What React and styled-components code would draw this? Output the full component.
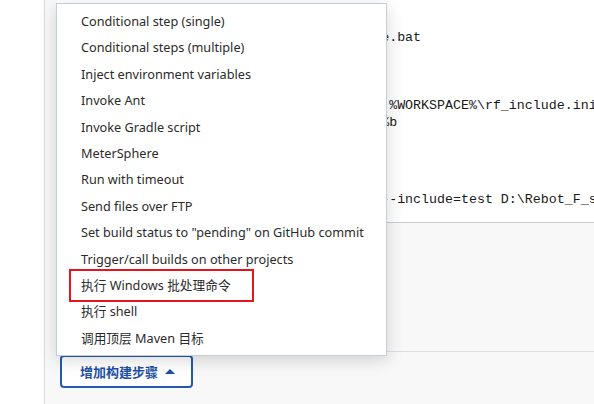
import styled, { createGlobalStyle } from "styled-components";

const GlobalStyle = createGlobalStyle`
  html, body {
    margin: 0;
    padding: 0;
    background: #ffffff;
    overflow: hidden;
  }
  * { box-sizing: border-box; }
`;

const Page = styled.div`
  display: flex;
  width: 594px;
  height: 404px;
  font-family: "Segoe UI", "Noto Sans", "Noto Sans CJK SC", sans-serif;
`;

const Sidebar = styled.div`
  width: 45px;
  flex-shrink: 0;
  background: #ffffff;
  border-right: 1px solid #dadada;
`;

const Main = styled.div`
  flex: 1;
  position: relative;
  display: flex;
  flex-direction: column;
  background: #f8f8f8;
`;

const Editor = styled.div`
  height: 223px;
  margin-left: 12px;
  padding: 29px 0 0 5px;
  background: #ffffff;
  border-bottom: 1px solid #c9d0d5;
  overflow: hidden;
`;

const CodeLine = styled.div`
  height: 17px;
  margin-top: ${(p) => p.$gap || 0}px;
  font-family: "Liberation Mono", monospace;
  font-size: 13.3px;
  line-height: 17px;
  color: #1a1a1a;
  white-space: pre;
`;

const Filler = styled.div`
  height: 128px;
`;

const Footer = styled.div`
  flex: 1;
  margin-left: 12px;
  border-top: 1px solid #dedede;
  padding: 3px 0 0 3px;
`;

const AddButton = styled.button`
  display: flex;
  align-items: center;
  gap: 7px;
  height: 33px;
  width: 133px;
  padding: 0 0 0 18px;
  background: #ffffff;
  border: 2px solid #2459b2;
  border-radius: 4px;
  color: #1d4fa5;
  font-family: "Noto Sans CJK SC", sans-serif;
  font-size: 13px;
  font-weight: 700;
  cursor: pointer;
`;

const Caret = styled.span`
  width: 0;
  height: 0;
  border-left: 5px solid transparent;
  border-right: 5px solid transparent;
  border-bottom: 5px solid #1d4fa5;
  margin-top: -1px;
`;

const Menu = styled.ul`
  position: absolute;
  left: 11px;
  top: 3px;
  width: 331px;
  margin: 0;
  padding: 4px 0;
  list-style: none;
  background: #ffffff;
  border: 1px solid #c6cfd6;
  box-shadow: 0 4px 16px rgba(0, 0, 0, 0.16);
  z-index: 2;
`;

const Item = styled.li`
  position: relative;
  height: 26.4px;
  padding-left: 24px;
  font-size: 12.7px;
  line-height: 26.4px;
  color: #2b2b2b;
  white-space: nowrap;

  ${(p) =>
    p.$marked &&
    `
    &::after {
      content: "";
      position: absolute;
      left: 12px;
      top: -3px;
      width: 181px;
      height: 29px;
      border: 2px solid #e5141e;
    }
  `}
`;

const steps = [
  "Conditional step (single)",
  "Conditional steps (multiple)",
  "Inject environment variables",
  "Invoke Ant",
  "Invoke Gradle script",
  "MeterSphere",
  "Run with timeout",
  "Send files over FTP",
  'Set build status to "pending" on GitHub commit',
  "Trigger/call builds on other projects",
  "执行 Windows 批处理命令",
  "执行 shell",
  "调用顶层 Maven 目标",
];

const App = () => {
  return (
    <Page>
      <GlobalStyle />
      <Sidebar />
      <Main>
        <Editor>
          <CodeLine>{"call D:\\Robot_F_script\\tools\\prepare_case.bat"}</CodeLine>
          <CodeLine />
          <CodeLine />
          <CodeLine />
          <CodeLine>{"for /f \"usebackq tokens=*\" %%b in ('type %WORKSPACE%\\rf_include.ini')"}</CodeLine>
          <CodeLine>{"      set ROBOT_INCLUDE_ARGS=--include %%b"}</CodeLine>
          <CodeLine $gap={60}>
            {"python -m robot --outputdir %WORKSPACE% --include=test D:\\Rebot_F_script\\testcase"}
          </CodeLine>
        </Editor>
        <Filler />
        <Footer>
          <AddButton>
            增加构建步骤
            <Caret />
          </AddButton>
        </Footer>
        <Menu>
          {steps.map((s) => (
            <Item key={s} $marked={s === "执行 Windows 批处理命令"}>
              {s}
            </Item>
          ))}
        </Menu>
      </Main>
    </Page>
  );
};

export default App;
